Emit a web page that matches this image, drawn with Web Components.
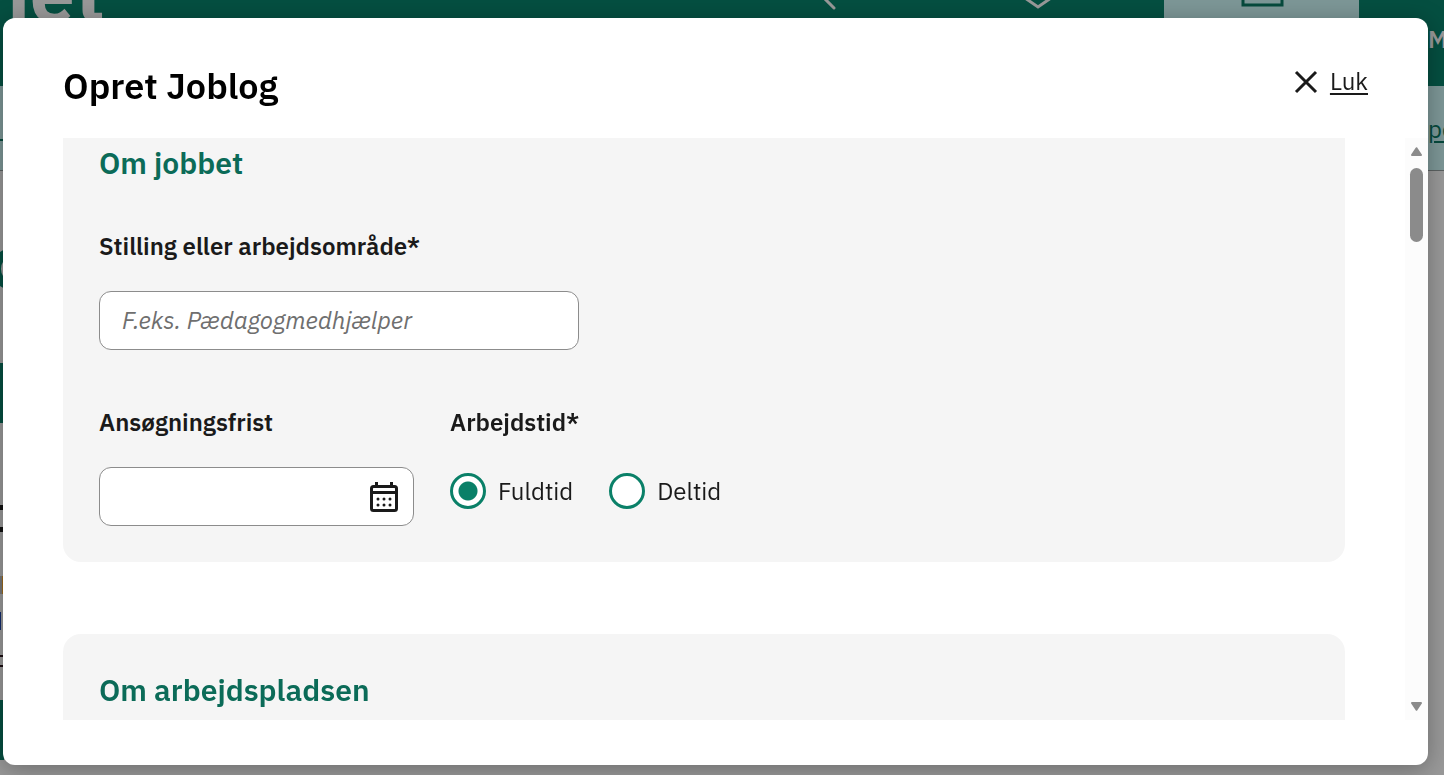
<!DOCTYPE html>
<html lang="da">
<head>
<meta charset="utf-8">
<title>Opret Joblog</title>
<style>
  html, body { height: 100%; margin: 0; }
  body {
    font-family: "IBM Plex Sans", "Noto Sans", "Open Sans", sans-serif;
    font-size: 24px; line-height: 36px; color: #1a1a1a;
    overflow: hidden;
    --green: #0a8068; --heading: #0b6b58; --panel: #f5f5f5; --line: #8c8c8c;
  }
</style>
</head>
<body>
<page-backdrop>
  <site-header></site-header>
  <site-subnav></site-subnav>
  <site-main></site-main>
</page-backdrop>
<modal-dialog heading="Opret Joblog">
  <form-panel heading="Om jobbet">
    <text-field label="Stilling eller arbejdsområde*" placeholder="F.eks. Pædagogmedhjælper"></text-field>
    <field-row>
      <date-field label="Ansøgningsfrist"></date-field>
      <radio-group label="Arbejdstid*" options="Fuldtid,Deltid"></radio-group>
    </field-row>
  </form-panel>
  <form-panel heading="Om arbejdspladsen"></form-panel>
</modal-dialog>

<script>
const define = (name, html, setup) => {
  const template = document.createElement('template');
  template.innerHTML = html;
  customElements.define(name, class extends HTMLElement {
    connectedCallback() {
      if (this.shadowRoot) return;
      const root = this.attachShadow({ mode: 'open' });
      root.append(template.content.cloneNode(true));
      if (setup) setup(this, root);
    }
  });
};

define('page-backdrop', `
  <style>
    :host { display: flex; flex-direction: column; height: 100vh; overflow: hidden; background: #999; }
  </style>
  <slot></slot>`);

define('site-header', `
  <style>
    :host { display: flex; height: 86px; flex: none; background: #054f41; color: #999; overflow: hidden; }
    .logo { flex: 1; font-size: 80px; line-height: 84px; font-weight: 700; margin: -50px 0 0 -18px; }
    svg { display: block; flex: none; fill: none; stroke: #999; stroke-width: 3; stroke-linecap: round; }
    .search { margin-right: 186px; }
    .saved { margin-right: 111px; }
    .tab { width: 195px; background: #7d9797; display: flex; justify-content: center; }
    .tab svg { stroke: #064a3d; stroke-linecap: butt; }
    .menu { box-sizing: border-box; width: 85px; padding: 21px 0 0 69px; overflow: hidden; font-weight: 600; white-space: nowrap; }
  </style>
  <div class="logo">net</div>
  <svg class="search" width="14" height="12"><path d="M0-3 11 8"/></svg>
  <svg class="saved" width="30" height="12"><path d="M2-2 15 7 28-2"/></svg>
  <div class="tab"><svg width="44" height="12"><path d="M3-4V5H42V-4" stroke-width="3"/></svg></div>
  <div class="menu">M</div>`);

define('site-subnav', `
  <style>
    :host { display: flex; justify-content: space-between; box-sizing: border-box; height: 85px; flex: none;
      padding-top: 26px; background: #7d9797; border-bottom: 1px solid #5c6262; overflow: hidden; }
    .edge { width: 3px; height: 30px; margin-top: -3px; border-bottom: 2px solid #064a3d; }
    a { width: 16px; color: #064a3d; line-height: 34px; text-underline-offset: 3px; text-decoration-thickness: 2px; }
  </style>
  <span class="edge"></span><a href="#">pe</a>`);

define('site-main', `
  <style>
    :host { display: flex; flex-direction: column; align-items: flex-start; flex: 1; overflow: hidden; }
    div { flex: none; box-sizing: border-box; width: 4px; }
    .ring { width: 34px; height: 40px; border: 9px solid #054f41; border-radius: 50%; margin: 78px 0 74px -8px; }
    .button { height: 60px; background: #054f41; }
    .title { height: 27px; margin-top: 82px; border: solid #111; border-width: 5px 0; }
    .mark { height: 18px; margin-top: 44px; background: linear-gradient(90deg, #777 2px, #9c6a1c 2px); }
    .info { height: 18px; width: 1px; margin-top: 18px; background: #102a6b; }
    .link { height: 12px; margin: 25px 0 33px; border: solid #1a0d12; border-width: 2px 0; }
  </style>
  <div class="ring"></div><div class="button"></div><div class="title"></div><div class="mark"></div>
  <div class="info"></div><div class="link"></div><div class="button"></div>`);

define('field-row', `
  <style>:host { display: flex; gap: 36px; }</style>
  <slot></slot>`);

define('text-field', `
  <style>
    :host { display: flex; flex-direction: column; gap: 28px; max-width: 480px; }
    label { font-weight: 600; line-height: 34px; }
    input { box-sizing: border-box; width: 100%; height: 59px; padding: 0 22px 2px; border: 1px solid var(--line);
      border-radius: 12px; background: #fff; font: inherit; color: inherit; }
    input::placeholder { color: #6f6f6f; font-style: italic; opacity: 1; }
  </style>
  <label for="field"></label><input id="field" type="text">`,
  (host, root) => {
    root.querySelector('label').textContent = host.getAttribute('label');
    root.querySelector('input').placeholder = host.getAttribute('placeholder');
  });

define('date-field', `
  <style>
    :host { display: flex; flex-direction: column; gap: 28px; width: 315px; }
    label { font-weight: 600; line-height: 34px; }
    .box { display: flex; align-items: center; box-sizing: border-box; height: 59px; padding: 0 14px 0 22px;
      border: 1px solid var(--line); border-radius: 12px; background: #fff; }
    input { flex: 1; min-width: 0; border: 0; padding: 0; background: none; font: inherit; outline: 0; }
    button { border: 0; padding: 0; background: none; color: inherit; }
    svg { display: block; }
  </style>
  <label for="date"></label>
  <div class="box">
    <input id="date" type="text">
    <button type="button" aria-label="Vælg dato">
      <svg width="30" height="32" viewBox="0 0 30 32">
        <rect x="2.500" y="5.500" width="25" height="24" rx="2" fill="none" stroke="currentColor" stroke-width="3"/>
        <path d="M2 11.500H28M7.500 1V6M22.500 1V6" stroke="currentColor" stroke-width="3"/>
        <path d="M9 18h.01M15 18h.01M21 18h.01M9 24h.01M15 24h.01M21 24h.01" stroke="currentColor" stroke-width="3" stroke-linecap="round"/>
      </svg>
    </button>
  </div>`,
  (host, root) => { root.querySelector('label').textContent = host.getAttribute('label'); });

define('radio-group', `
  <style>
    :host { display: block; }
    fieldset { border: 0; margin: 0; padding: 0; min-width: 0; }
    legend { padding: 0; font-weight: 600; line-height: 34px; }
    .options { display: flex; gap: 36px; margin-top: 34px; }
    label { display: flex; align-items: center; gap: 12px; }
    input { appearance: none; box-sizing: border-box; width: 36px; height: 36px; margin: 0; border: 3px solid var(--green);
      border-radius: 50%; background: #fff; }
    input:checked { background: radial-gradient(circle, var(--green) 9px, #fff 10px); }
  </style>
  <fieldset><legend></legend><div class="options"></div></fieldset>`,
  (host, root) => {
    root.querySelector('legend').textContent = host.getAttribute('label');
    host.getAttribute('options').split(',').forEach((name, i) => {
      const label = document.createElement('label');
      const input = document.createElement('input');
      Object.assign(input, { type: 'radio', name: 'choice', value: name, checked: i === 0 });
      label.append(input, name);
      root.querySelector('.options').append(label);
    });
  });

define('form-panel', `
  <style>
    :host { display: block; padding: 36px; background: var(--panel); border-radius: 18px; }
    h2 { margin: 0; font-size: 30px; line-height: 40px; font-weight: 600; color: var(--heading); }
    .fields { display: flex; flex-direction: column; gap: 55px; margin-top: 46px; }
  </style>
  <h2></h2><div class="fields"><slot></slot></div>`,
  (host, root) => { root.querySelector('h2').textContent = host.getAttribute('heading'); });

define('scroll-rail', `
  <style>
    :host { display: flex; flex-direction: column; align-items: center; box-sizing: border-box; width: 23px; flex: none;
      padding: 9px 0; background: #fcfcfc; }
    svg { display: block; fill: #8b8b8b; stroke: #8b8b8b; stroke-width: 2; stroke-linejoin: round; }
    .thumb { width: 13px; height: 74px; margin: 12px 0 auto; border-radius: 7px; background: #8b8b8b; }
  </style>
  <svg width="11" height="9" viewBox="0 0 11 9"><path d="M5.500 1.200 10 8H1Z"/></svg>
  <div class="thumb"></div>
  <svg width="11" height="9" viewBox="0 0 11 9"><path d="M5.500 7.800 10 1H1Z"/></svg>`);

define('modal-dialog', `
  <style>
    :host { position: fixed; inset: 18px 16px 10px 3px; display: flex; flex-direction: column; background: #fff;
      border-radius: 12px; box-shadow: 0 4px 24px rgba(0, 0, 0, .3); }
    header { display: flex; justify-content: space-between; align-items: flex-start; box-sizing: border-box;
      height: 120px; flex: none; padding: 48px 60px 0; }
    h1 { margin: 0; font-size: 36px; line-height: 40px; font-weight: 600; color: #000; }
    button { display: flex; align-items: flex-start; gap: 12px; border: 0; padding: 0; background: none; color: inherit;
      font: inherit; line-height: 30px; text-decoration: underline; text-underline-offset: 3px; text-decoration-thickness: 2px; }
    button svg { margin-top: 4px; }
    .body { display: flex; flex: 1; min-height: 0; margin-bottom: 45px; }
    .scroll { flex: 1; min-width: 0; overflow-y: auto; scrollbar-width: none; }
    .content { display: flex; flex-direction: column; gap: 72px; padding: 0 60px 36px; }
  </style>
  <header>
    <h1></h1>
    <button type="button">
      <svg width="24" height="24" viewBox="0 0 24 24" fill="none" stroke="currentColor" stroke-width="3"><path d="M2 2 22 22M22 2 2 22"/></svg>
      <span>Luk</span>
    </button>
  </header>
  <div class="body">
    <div class="scroll"><div class="content"><slot></slot></div></div>
    <scroll-rail></scroll-rail>
  </div>`,
  (host, root) => {
    root.querySelector('h1').textContent = host.getAttribute('heading');
    root.querySelector('.scroll').scrollTop = 31;
  });
</script>
</body>
</html>
